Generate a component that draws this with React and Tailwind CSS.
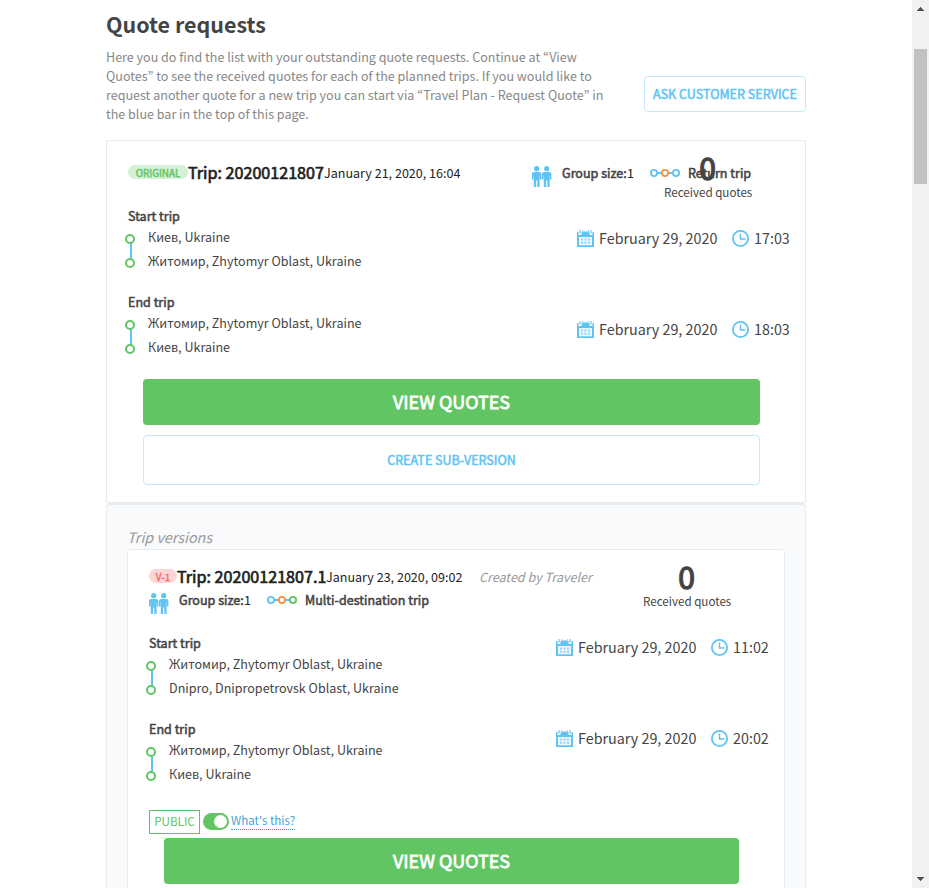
import React from "react";

const bold = "[-webkit-text-stroke:0.042em_currentColor]";

function People() {
  const person = (
    <>
      <circle cx="4.7" cy="2.700" r="2.6" />
      <path d="M2.6 6h4.200c1.700 0 2.600.9 2.600 2.300v5.200H7.900V9.600h-.3V21H5.300v-6.600H4.100V21H1.800V9.600h-.3v3.900H0V8.300C0 6.900.9 6 2.600 6z" />
    </>
  );
  return (
    <svg width="20" height="22" viewBox="0 0 20 22" fill="#5fc4f3" className="mt-[7px] block shrink-0">
      <g>{person}</g>
      <g transform="translate(10 0)">{person}</g>
    </svg>
  );
}

function Route({ end }) {
  return (
    <svg width="30" height="10" viewBox="0 0 30 10" fill="none" strokeWidth="1.9" className="-mt-px block shrink-0">
      <path d="M7 5h5M18 5h5" stroke="#5fc4f3" />
      <circle cx="4" cy="5" r="3.100" stroke="#5fc4f3" />
      <circle cx="15" cy="5" r="3.100" stroke="#f7924a" />
      <circle cx="26" cy="5" r="3.100" stroke={end} />
    </svg>
  );
}

function Calendar() {
  return (
    <svg width="17" height="17" viewBox="0 0 17 17" className="block shrink-0">
      <path d="M0 2h1.500v3h3V2H6v-.5h5V2h1.500v3h3V2H17v15H0z" fill="#5fc4f3" />
      <path d="M2.200 0h1.600v3.500H2.200zM5 0h1v3H5zM11 0h1v3h-1zM13.200 0h1.600v3.500h-1.600z" fill="#8fd5f7" />
      <path d="M2 7h13v8.300H2z" fill="#ecf8fe" />
      <path d="M4 8.600h2v2H4zM7.500 8.600h2v2h-2zM11 8.600h2v2h-2zM4 11.700h2v2H4zM7.500 11.700h2v2h-2zM11 11.700h2v2h-2z" fill="#8fd5f7" />
    </svg>
  );
}

function Clock() {
  return (
    <svg width="17" height="17" viewBox="0 0 17 17" fill="none" stroke="#5fc4f3" strokeWidth="1.800" className="block shrink-0">
      <circle cx="8.500" cy="8.500" r="7.600" />
      <path d="M8.500 3.500v5.500h5" strokeWidth="1.500" />
    </svg>
  );
}

function Stops() {
  return (
    <svg width="10" height="34" viewBox="0 0 10 34" className="mt-[8px] block shrink-0">
      <path d="M6 9v16" stroke="#5fc4f3" strokeWidth="2" />
      <circle cx="5" cy="5" r="4" fill="#fff" stroke="#61c564" strokeWidth="2" />
      <circle cx="5" cy="29" r="4" fill="#fff" stroke="#61c564" strokeWidth="2" />
    </svg>
  );
}

function Leg({ title, from, to, date, time, offset }) {
  return (
    <div className="flex h-[86px] justify-between pr-[15px]">
      <div>
        <div className={`h-5 leading-5 ${bold}`}>{title}</div>
        <div className="-ml-[3px] flex">
          <Stops />
          <div className="-mt-px ml-[13px] leading-6">
            <div>{from}</div>
            <div>{to}</div>
          </div>
        </div>
      </div>
      <div className={`flex h-5 items-center text-[14.340px] leading-5 ${offset}`}>
        <Calendar />
        <span className="ml-[5px] w-[133px]">{date}</span>
        <Clock />
        <span className="ml-[5px] w-[36px]">{time}</span>
      </div>
    </div>
  );
}

function Received() {
  return (
    <div className="w-[87px] text-center">
      <div className={`h-[27px] text-[30px] leading-[22px] ${bold}`}>0</div>
      <div className="h-[18px] text-[11.620px] leading-[18px]">Received quotes</div>
    </div>
  );
}

function Group() {
  return (
    <>
      <People />
      <span className={`ml-[10px] w-[65px] ${bold}`}>Group size:</span>
      <span className="w-[23px] text-[#222]">1</span>
    </>
  );
}

const KYIV = "Киев, Ukraine";
const ZHYTOMYR = "Житомир, Zhytomyr Oblast, Ukraine";

export default function App() {
  return (
    <div className="flex h-[888px] w-[929px] overflow-hidden whitespace-nowrap bg-white font-['Noto_Sans_CJK_KR',sans-serif] text-[12.550px] text-[#444]">
      <main className="w-[912px] shrink-0 pl-[106px]">
        <div className="w-[700px]">
          <header className="flex h-[140px] justify-between">
            <div>
              <h1 className="h-[47px] pt-[8px] text-[21.450px] font-bold leading-8">Quote requests</h1>
              <p className="leading-[19px] text-[#888]">
                Here you do find the list with your outstanding quote requests. Continue at “View
                <br />
                Quotes” to see the received quotes for each of the planned trips. If you would like to
                <br />
                request another quote for a new trip you can start via “Travel Plan - Request Quote” in
                <br />
                the blue bar in the top of this page.
              </p>
            </div>
            <button className={`mt-[76px] h-[36px] w-[162px] rounded-[4px] border border-[#c5e9fb] text-[#5fc4f3] ${bold}`}>
              ASK CUSTOMER SERVICE
            </button>
          </header>

          <section className="relative h-[364px] rounded-[3px] border border-b-2 border-[#e8ebee] pl-[21px] pt-[21px]">
            <div className="flex h-[22px] items-center">
              <span className={`-mt-[2px] h-[14px] w-[60px] rounded-full bg-[#d5f0d6] text-center text-[9.900px] leading-[16px] text-[#61c564] ${bold}`}>
                ORIGINAL
              </span>
              <span className={`-mt-[2px] w-[136px] text-[16.130px] text-[#222] ${bold}`}>Trip: 20200121807</span>
              <span className="w-[208px] text-[#222]">January 21, 2020, 16:04</span>
              <Group />
              <Route end="#5fc4f3" />
              <span className={`ml-2 ${bold}`}>Return trip</span>
            </div>
            <div className="absolute left-[557px] top-[15px]">
              <Received />
            </div>
            <div className="mt-[22px]">
              <Leg title="Start trip" from={KYIV} to={ZHYTOMYR} date="February 29, 2020" time="17:03" offset="mt-[22px]" />
              <Leg title="End trip" from={ZHYTOMYR} to={KYIV} date="February 29, 2020" time="18:03" offset="mt-[27px]" />
            </div>
            <div className="ml-[15px] mt-[1px] flex w-[617px] flex-col gap-[10px]">
              <button className={`h-[46px] rounded-[4px] bg-[#61c564] pb-[2px] text-[17.950px] text-white ${bold}`}>VIEW QUOTES</button>
              <button className={`h-[50px] rounded-[4px] border border-[#c5e9fb] text-[#5fc4f3] ${bold}`}>
                CREATE SUB-VERSION
              </button>
            </div>
          </section>

          <section className="h-[420px] rounded-t-[3px] border border-[#e8ebee] bg-[#f8fafc] pl-5 pt-[21px]">
            <h2 className="h-[23px] text-[14.340px] italic leading-[22px] text-[#999]">Trip versions</h2>
            <div className="relative h-[370px] w-[658px] rounded-[3px] border border-[#e8ebee] bg-white pl-[21px] pt-[16px]">
              <div className="flex h-[22px] items-center">
                <span className={`-mt-[2px] h-[14px] w-[28px] rounded-full bg-[#fdd5d5] text-center text-[9.900px] leading-[16px] text-[#f96868] ${bold}`}>
                  V-1
                </span>
                <span className={`-mt-[2px] w-[149px] text-[16.130px] text-[#222] ${bold}`}>Trip: 20200121807.1</span>
                <span className="w-[153px] text-[#222]">January 23, 2020, 09:02</span>
                <span className="italic text-[#999]">Created by Traveler</span>
              </div>
              <div className="flex h-[24px] items-center">
                <Group />
                <Route end="#61c564" />
                <span className={`ml-2 ${bold}`}>Multi-destination trip</span>
              </div>
              <div className="absolute left-[515px] top-[15px]">
                <Received />
              </div>
              <div className="mt-[21px]">
                <Leg title="Start trip" from={ZHYTOMYR} to="Dnipro, Dnipropetrovsk Oblast, Ukraine" date="February 29, 2020" time="11:02" offset="mt-[4px]" />
                <Leg title="End trip" from={ZHYTOMYR} to={KYIV} date="February 29, 2020" time="20:02" offset="mt-[9px]" />
              </div>
              <div className="mt-[5px] flex h-[24px] items-center">
                <span className="h-[24px] w-[51px] border border-[#61c564] text-center text-[11.640px] leading-[20px] text-[#61c564]">PUBLIC</span>
                <span className="-mt-px ml-[3px] flex h-[17px] w-[26px] justify-end rounded-full bg-[#61c564] p-[2px]">
                  <span className="size-[13px] rounded-full bg-white" />
                </span>
                <span className="-mt-px ml-[2px] h-[17px] w-[64px] border-b border-dotted border-[#3d9bd0] text-[11.600px] leading-[15px] text-[#4a9fd0]">What's this?</span>
              </div>
              <button className={`ml-[15px] mt-[4px] block h-[46px] w-[575px] rounded-[4px] bg-[#61c564] pb-[2px] text-[17.950px] text-white ${bold}`}>
                VIEW QUOTES
              </button>
            </div>
          </section>
        </div>
      </main>

      <aside className="flex h-[888px] w-[17px] shrink-0 flex-col items-center bg-[#f1f1f1]">
        <svg width="7" height="4" viewBox="0 0 7 4" shapeRendering="crispEdges" className="mt-[7px] block">
          <path d="M3 0h1v1h1v1h1v1h1v1H0V3h1V2h1V1h1z" fill="#505050" />
        </svg>
        <div className="mt-[38px] h-[135px] w-[13px] bg-[#c1c1c1]" />
        <svg width="7" height="4" viewBox="0 0 7 4" shapeRendering="crispEdges" className="mb-[7px] mt-auto block">
          <path d="M0 0h7v1H6v1H5v1H4v1H3V3H2V2H1V1H0z" fill="#505050" />
        </svg>
      </aside>
    </div>
  );
}
